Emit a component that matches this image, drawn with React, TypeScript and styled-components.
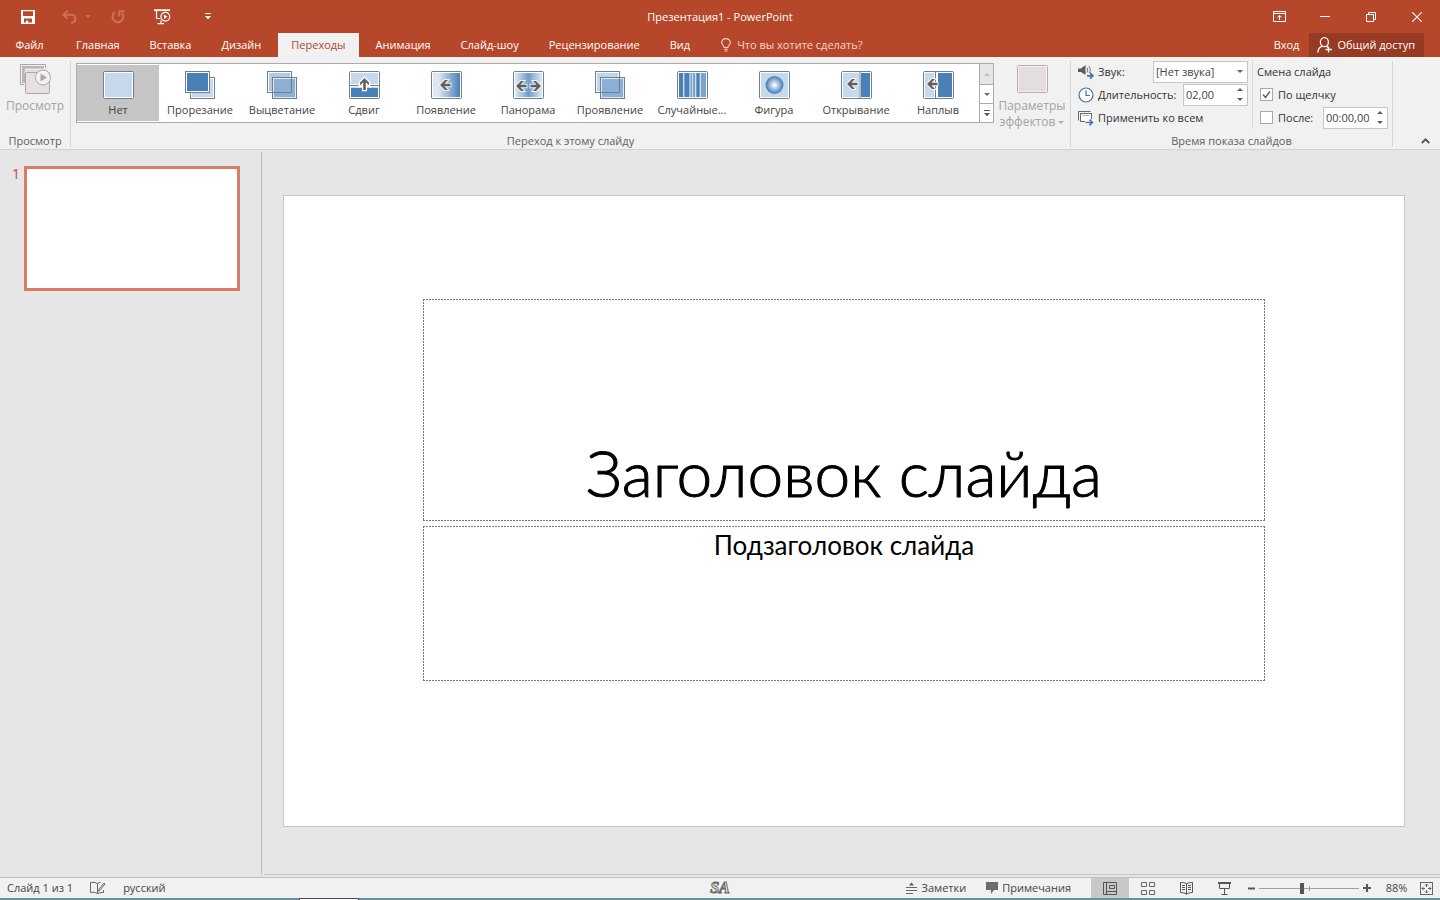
import React, { useState } from "react";
import styled, { createGlobalStyle, css } from "styled-components";

const UI_FONT = `"Open Sans", "Noto Sans", sans-serif`;

const GlobalStyle = createGlobalStyle`
  *, *::before, *::after { box-sizing: border-box; }
  body { margin: 0; background: #e6e6e6; }
  button, input, select { font: inherit; color: inherit; margin: 0; }
  svg { display: block; flex: none; }
`;

const Window = styled.div`
  display: flex;
  flex-direction: column;
  min-height: 100vh;
  font: 11px/16px ${UI_FONT};
  color: #444;
`;

const plainButton = css`
  border: 0;
  padding: 0;
  background: transparent;
  cursor: pointer;
`;

/* Title bar */
const Header = styled.header`
  background: #b7472a;
  color: #fff;
`;
const TitleBar = styled.div`
  display: grid;
  grid-template-columns: 1fr auto 1fr;
  align-items: center;
  height: 33px;
`;
const QuickAccess = styled.div`
  display: flex;
  padding-left: 5px;
`;
const QuickButton = styled.button<{ $dim?: boolean; $split?: boolean }>`
  ${plainButton}
  display: flex;
  align-items: center;
  justify-content: ${(p) => (p.$split ? "flex-end" : "center")};
  gap: 8px;
  padding-right: ${(p) => (p.$split ? "4px" : "0")};
  width: 45px;
  height: 30px;
  color: ${(p) => (p.$dim ? "#cf6f57" : "#fff")};
`;
const Caption = styled.h1`
  margin: 0;
  font-size: 11px;
  font-weight: 400;
  line-height: 16px;
`;
const WindowControls = styled.div`
  display: flex;
  justify-content: flex-end;
`;
const ControlButton = styled.button`
  ${plainButton}
  display: grid;
  place-items: center;
  width: 46px;
  height: 30px;
  color: #fff;
`;

/* Tabs */
const TabBar = styled.nav`
  display: flex;
  align-items: stretch;
  height: 24px;
  padding-right: 16px;
`;
const FileTab = styled.button`
  ${plainButton}
  width: 59px;
`;
const Tabs = styled.div`
  display: flex;
  gap: 4px;
  margin-left: 4px;
`;
const Tab = styled.button<{ $active?: boolean }>`
  ${plainButton}
  padding: 0 13px;
  white-space: nowrap;
  background: ${(p) => (p.$active ? "#f1f1f1" : "transparent")};
  color: ${(p) => (p.$active ? "#b7472a" : "inherit")};
`;
const TellMe = styled.button`
  ${plainButton}
  display: flex;
  align-items: center;
  gap: 6px;
  margin-left: 18px;
  color: #f7d5cb;
`;
const Account = styled.div`
  display: flex;
  margin-left: auto;
`;
const SignIn = styled.button`
  ${plainButton}
  padding: 0 10px;
`;
const Share = styled.button`
  ${plainButton}
  display: flex;
  align-items: center;
  gap: 4px;
  padding: 0 9px 0 8px;
  background: #963a24;
  color: #fff;
`;

/* Ribbon */
const Ribbon = styled.section`
  display: flex;
  height: 93px;
  padding: 4px 0 2px;
  background: #f1f1f1;
  border-bottom: 1px solid #d2d2d2;
`;
const Group = styled.div<{ $grow?: boolean }>`
  display: flex;
  flex-direction: column;
  justify-content: space-between;
  flex: ${(p) => (p.$grow ? "1 1 0" : "none")};
  min-width: 0;
  padding-top: 2px;
  border-right: 1px solid #d5d5d5;
`;
const GroupBody = styled.div`
  display: flex;
`;
const GroupLabel = styled.div`
  text-align: center;
  color: #606060;
  line-height: 12px;
`;
const BigButton = styled.button<{ $wide?: boolean }>`
  ${plainButton}
  display: flex;
  flex-direction: column;
  align-items: center;
  gap: ${(p) => (p.$wide ? "5px" : "3px")};
  width: ${(p) => (p.$wide ? "76px" : "70px")};
  padding-top: ${(p) => (p.$wide ? "2px" : "1px")};
  font-size: 12px;
  color: #a3a3a3;
`;
const WithArrow = styled.span`
  display: inline-flex;
  align-items: center;
  gap: 3px;
`;
const Gallery = styled.div`
  display: flex;
  flex: 1 1 0;
  min-width: 0;
  height: 60px;
  margin-left: 5px;
  background: #fff;
  border: 1px solid #ababab;
`;
const GalleryItem = styled.button<{ $selected?: boolean }>`
  ${plainButton}
  display: flex;
  flex-direction: column;
  align-items: center;
  gap: 3px;
  flex: 1 1 0;
  min-width: 0;
  padding-top: 6px;
  margin: 1px 0;
  white-space: nowrap;
  background: ${(p) => (p.$selected ? "#c5c5c5" : "transparent")};
`;
const GalleryScroll = styled.div`
  display: grid;
  grid-template-rows: 20px 19px 19px;
  width: 14px;
  border-left: 1px solid #ababab;
`;
const ScrollButton = styled.button`
  ${plainButton}
  display: grid;
  place-items: center;
  color: #555;
  & + & { border-top: 1px solid #ababab; }
  &:disabled { background: #e6e6e6; color: #b5b5b5; }
`;

const TimingColumn = styled.div<{ $second?: boolean }>`
  display: grid;
  grid-template-rows: repeat(3, 23px);
  align-items: center;
  width: ${(p) => (p.$second ? "140px" : "181px")};
  padding: ${(p) => (p.$second ? "0 4px" : "0 4px 0 7px")};
  margin-top: -3px;
  border-left: ${(p) => (p.$second ? "1px solid #dcdcdc" : "0")};
`;
const TimingRow = styled.div`
  display: flex;
  align-items: center;
  gap: 4px;
  color: #333;
  white-space: nowrap;
`;
const CommandButton = styled.button`
  ${plainButton}
  display: flex;
  align-items: center;
  gap: 4px;
`;
const Field = styled.div<{ $w: number }>`
  display: grid;
  grid-template-columns: 1fr 14px;
  width: ${(p) => p.$w}px;
  height: 22px;
  margin-left: auto;
  background: #fff;
  border: 1px solid #c6c6c6;
  color: #444;
`;
const TextInput = styled.input`
  min-width: 0;
  border: 0;
  padding: 0 0 0 2px;
  background: transparent;
`;
const Select = styled.select`
  grid-area: 1 / 1 / 2 / 3;
  min-width: 0;
  border: 0;
  padding: 0 0 0 2px;
  background: transparent;
  appearance: none;
`;
const SelectArrow = styled.span`
  grid-area: 1 / 2;
  display: grid;
  place-items: center;
  pointer-events: none;
`;
const Steps = styled.span`
  display: grid;
  grid-template-rows: 1fr 1fr;
`;
const Step = styled.button`
  ${plainButton}
  display: grid;
  place-items: center;
`;
const CheckBox = styled.span`
  display: grid;
  width: 13px;
  height: 13px;
  margin-left: 3px;
  margin-right: 1px;
  input, svg { grid-area: 1 / 1; }
  svg { pointer-events: none; visibility: hidden; }
  input { appearance: none; width: 13px; height: 13px; border: 1px solid #a8a8a8; background: #fff; }
  input:checked + svg { visibility: visible; }
`;
const Collapse = styled.button`
  ${plainButton}
  align-self: flex-end;
  display: grid;
  place-items: center;
  width: 30px;
  height: 12px;
  margin-left: 17px;
  color: #555;
`;

/* Workspace */
const Workspace = styled.main`
  display: flex;
  flex: 1;
  padding-top: 2px;
  background: #e6e6e6;
`;
const ThumbPane = styled.aside`
  width: 262px;
  padding: 14px 21px 0 12px;
  margin-bottom: 2px;
  border-right: 1px solid #bdbdbd;
`;
const ThumbRow = styled.div`
  display: flex;
  gap: 4px;
  color: #c8492b;
  font-size: 14px;
  line-height: 16px;
`;
const Thumb = styled.button`
  ${plainButton}
  flex: 1;
  aspect-ratio: 216 / 125;
  background: #fff;
  border: 3px solid #d97c64;
`;
const Stage = styled.div`
  display: flex;
  flex: 1;
  min-width: 0;
  align-items: center;
  padding: 0 35px 4px 19px;
  margin: 0 0 2px 2px;
  border-bottom: 1px solid #c3c3c3;
`;
const Slide = styled.article`
  display: grid;
  grid-template-rows: 103fr 222fr 5fr 155fr 145fr;
  width: 100%;
  aspect-ratio: 1122 / 632;
  padding: 0 12.4%;
  background: #fff;
  border: 1px solid #c6c6c6;
  color: #000;
  font-family: Lato, Carlito, sans-serif;
`;
const dash = (direction: string) =>
  `repeating-linear-gradient(${direction}, #777 0 2px, transparent 2px 3px)`;
const Placeholder = styled.div<{ $row: number; $bottom?: boolean }>`
  grid-row: ${(p) => p.$row};
  display: flex;
  justify-content: center;
  align-items: ${(p) => (p.$bottom ? "flex-end" : "flex-start")};
  padding: 4px 8px 10px;
  background:
    ${dash("90deg")} top / 100% 1px no-repeat,
    ${dash("90deg")} bottom / 100% 1px no-repeat,
    ${dash("180deg")} left / 1px 100% no-repeat,
    ${dash("180deg")} right / 1px 100% no-repeat;
`;
const SlideTitle = styled.h2`
  margin: 0;
  font-size: 64px;
  line-height: 76px;
  font-weight: 300;
  -webkit-text-stroke: 1px #000;
`;
const SlideSubtitle = styled.p`
  margin: 0;
  font-size: 26px;
  line-height: 30px;
`;

/* Status bar */
const StatusBar = styled.footer`
  display: grid;
  grid-template-columns: 1fr auto 1fr;
  align-items: center;
  height: 21px;
  background: #f1f1f1;
  border-top: 1px solid #bdbdbd;
`;
const StatusSide = styled.div<{ $end?: boolean }>`
  display: flex;
  align-items: center;
  justify-content: ${(p) => (p.$end ? "flex-end" : "flex-start")};
  gap: ${(p) => (p.$end ? "0" : "17px")};
  height: 20px;
  padding: 0 6px 0 7px;
  white-space: nowrap;
`;
const StatusButton = styled.button<{ $spaced?: boolean }>`
  ${plainButton}
  display: flex;
  align-items: center;
  gap: 4px;
  margin-right: ${(p) => (p.$spaced ? "20px" : "0")};
`;
const ViewButton = styled.button<{ $active?: boolean }>`
  ${plainButton}
  display: grid;
  place-items: center;
  width: 38px;
  height: 20px;
  background: ${(p) => (p.$active ? "#c8c8c8" : "transparent")};
`;
const ZoomButton = styled.button`
  ${plainButton}
  display: grid;
  place-items: center;
  width: 16px;
  height: 20px;
`;
const ZoomRange = styled.input`
  appearance: none;
  width: 100px;
  height: 12px;
  background:
    linear-gradient(#a0a0a0, #a0a0a0) center / 1px 5px no-repeat,
    linear-gradient(#a0a0a0, #a0a0a0) center / 100% 1px no-repeat;
  &::-webkit-slider-thumb {
    appearance: none;
    width: 4px;
    height: 11px;
    background: #555;
  }
`;
const ZoomValue = styled.button`
  ${plainButton}
  width: 43px;
`;
const Watermark = styled.div`
  font: italic bold 16px/16px "Liberation Serif", serif;
  color: #f1f1f1;
  -webkit-text-stroke: 1px #666;
`;
const Taskbar = styled.div`
  height: 2px;
  padding-left: 299px;
  background: #6892a3;
`;
const TaskbarItem = styled.div`
  width: 60px;
  height: 2px;
  background: #fff;
  border: 1px solid #4b4568;
  border-bottom: 0;
`;

/* Icons */
const Tri = ({ up, w = 6 }: { up?: boolean; w?: number }) => (
  <svg width={w} height={w / 2} viewBox="0 0 6 3">
    <path d={up ? "M0 3L3 0L6 3Z" : "M0 0H6L3 3Z"} fill="currentColor" opacity="0.85" />
  </svg>
);
const SaveIcon = () => (
  <svg width="14" height="14" viewBox="0 0 14 14">
    <path fill="currentColor" fillRule="evenodd" d="M0 0H14V14H0ZM2 1.3V6H12V1.3ZM3 8.5V12.6H5V10.4H7.2V12.6H11V8.5Z" />
  </svg>
);
const UndoIcon = () => (
  <svg width="15" height="14" viewBox="0 0 15 14" fill="none" stroke="currentColor" strokeWidth="2">
    <path d="M5.6 0.8L1.4 4.8L5.6 8.8M1.6 4.8H9.2C12 4.8 13.4 6.6 13.4 8.7C13.4 11 11.8 12.4 9 12.9" />
  </svg>
);
const RedoIcon = () => (
  <svg width="14" height="14" viewBox="0 0 14 14" fill="none" stroke="currentColor" strokeWidth="2">
    <path d="M4 2.2A5.4 5.4 0 1 0 10.8 3M8.2 6.5V1.2H13.5" />
  </svg>
);
const PresentIcon = () => (
  <svg width="17" height="16" viewBox="0 0 17 16" fill="none" stroke="currentColor" strokeWidth="1.2">
    <path d="M0 1.2H16" strokeWidth="1.8" />
    <path d="M2.5 2V9.5H6M7 11.5V14.5M3.5 14.7H10" />
    <circle cx="11.3" cy="7.8" r="4.4" />
    <path d="M10 5.6V10L13.6 7.8Z" fill="currentColor" stroke="none" />
  </svg>
);
const CustomizeIcon = () => (
  <svg width="6" height="7" viewBox="0 0 6 7" fill="currentColor">
    <path d="M0 0H6V1.1H0ZM0 3H6L3 6.2Z" />
  </svg>
);
const RibbonOptionsIcon = () => (
  <svg width="13" height="11" viewBox="0 0 13 11" fill="none" stroke="currentColor">
    <path d="M0.5 0.5H12.5V10.5H0.5ZM0.5 2.5H12.5M6.5 9V4.5M4.3 6.5L6.5 4.3L8.7 6.5" />
  </svg>
);
const MinimizeIcon = () => (
  <svg width="10" height="10" viewBox="0 0 10 10"><path d="M0 4.5H10" stroke="currentColor" /></svg>
);
const RestoreIcon = () => (
  <svg width="10" height="10" viewBox="0 0 10 10" fill="none" stroke="currentColor">
    <path d="M0.5 2.5H7.5V9.5H0.5ZM2.5 2.5V0.5H9.5V7.5H7.5" />
  </svg>
);
const CloseIcon = () => (
  <svg width="10" height="10" viewBox="0 0 10 10" stroke="currentColor" strokeWidth="1.1"><path d="M0 0L10 10M10 0L0 10" /></svg>
);
const BulbIcon = () => (
  <svg width="10" height="14" viewBox="0 0 10 14" fill="none" stroke="currentColor" strokeWidth="1.1">
    <path d="M3.2 9.5C3.2 7.8 0.7 7 0.7 4.6A4.3 4 0 0 1 9.3 4.6C9.3 7 6.8 7.8 6.8 9.5ZM3.2 11.3H6.8M3.6 13H6.4" />
  </svg>
);
const ShareIcon = () => (
  <svg width="16" height="16" viewBox="0 0 16 16" fill="none" stroke="currentColor" strokeWidth="1.3">
    <ellipse cx="7.4" cy="5.2" rx="4" ry="4.5" />
    <path d="M0.8 15.5C1 12 3 10 5.4 9.2M9.4 9.2L11 10.4M11.5 9.5V15.5M8.5 12.5H15" />
  </svg>
);
const PreviewIcon = () => (
  <svg width="31" height="31" viewBox="0 0 31 31" stroke="#aaa6a9">
    <path d="M0.5 20.5V0.5H25.5V4M0.5 20.5H4" fill="none" />
    <path d="M2 2H24V4.5H5V19H2Z" fill="#b9b6b8" stroke="none" />
    <rect x="4.5" y="5.5" width="23" height="4" fill="#e2dde0" stroke="none" />
    <rect x="5.5" y="8.5" width="24" height="21" rx="1" fill="#e6e0e4" />
    <circle cx="23" cy="13.5" r="7.5" fill="#f4f1f3" />
    <path d="M20.5 9.5V17.5L27 13.5Z" fill="#aaa6a9" stroke="none" />
  </svg>
);
const EffectIcon = () => (
  <svg width="31" height="28" viewBox="0 0 31 28">
    <rect x="0.5" y="0.5" width="30" height="27" rx="1" fill="#e3dde2" stroke="#b5aeb3" />
    <rect x="1.5" y="1.5" width="28" height="25" fill="none" stroke="#f3eff2" />
  </svg>
);

const EDGE = "#6b7f96";
const PALE = "#c7d8ea";
const BLUE = "#4a7fb8";
const ARROW_LEFT = "M0 5L5 0H8L4.4 3.8H10.5V6.2H4.4L8 10H5Z";

const Frame = ({ fill }: { fill: string }) => (
  <>
    <rect x="0.5" y="0.5" width="30" height="27" rx="1" fill="#fff" stroke={EDGE} />
    <rect x="2" y="2" width="27" height="24" fill={fill} />
  </>
);
const Arrow = ({ x, y, flip }: { x: number; y: number; flip?: boolean }) => (
  <path
    d={ARROW_LEFT}
    transform={flip ? `translate(${x + 11} ${y}) scale(-1 1)` : `translate(${x} ${y})`}
    fill="#606060"
    stroke="#fff"
    strokeOpacity="0.8"
    strokeWidth="2"
    paintOrder="stroke"
  />
);

type Kind = "none" | "cut" | "fade" | "push" | "wipe" | "split" | "reveal" | "bars" | "shape" | "uncover" | "cover";

const drawings: Record<Kind, React.ReactNode> = {
  none: <Frame fill={PALE} />,
  cut: (
    <>
      <rect x="5.5" y="6.5" width="24" height="21" fill="#fff" stroke={EDGE} />
      <rect x="7" y="8" width="21" height="18" fill={PALE} />
      <rect x="0.5" y="0.5" width="24" height="21" fill="#fff" stroke={EDGE} />
      <rect x="2" y="2" width="21" height="18" fill={BLUE} />
    </>
  ),
  fade: (
    <>
      <rect x="0.5" y="0.5" width="24" height="21" fill="#fff" stroke={EDGE} />
      <rect x="2" y="2" width="21" height="18" fill="#b4cbe1" />
      <rect x="5.5" y="6.5" width="24" height="21" fill="#dfe9f3" stroke={EDGE} />
      <rect x="7" y="8" width="21" height="18" fill="#8cafd3" />
      <path d="M6 21.5H24.5V7" fill="none" stroke={EDGE} />
    </>
  ),
  push: (
    <>
      <Frame fill={PALE} />
      <path d="M1 14.5H30" stroke="#fff" strokeWidth="3" />
      <path d="M1 14.5H30" stroke={EDGE} />
      <rect x="2" y="17" width="27" height="9" fill={BLUE} />
      <path d="M15.5 7L20 11.5V14.3L16.8 11.2V19H14.2V11.2L11 14.3V11.5Z" fill="#606060" stroke="#fff" strokeWidth="2.5" paintOrder="stroke" />
    </>
  ),
  wipe: (
    <>
      <Frame fill="url(#wipe)" />
      <Arrow x={9} y={9} />
    </>
  ),
  split: (
    <>
      <Frame fill="url(#split)" />
      <Arrow x={3} y={10} />
      <Arrow x={17} y={10} flip />
    </>
  ),
  reveal: (
    <>
      <rect x="0.5" y="0.5" width="24" height="21" fill="#fff" stroke={EDGE} />
      <rect x="2" y="2" width="21" height="18" fill="#c3d4e6" />
      <rect x="5.5" y="6.5" width="24" height="21" fill="#dfe9f3" stroke={EDGE} />
      <rect x="7" y="8" width="21" height="18" fill="#8cafd8" />
      <path d="M6 21.5H24.5V7" fill="none" stroke={EDGE} />
    </>
  ),
  bars: (
    <>
      <Frame fill="#7da3cc" />
      <path d="M2 2H6V26H2ZM8 2H12V26H8ZM20 2H22V26H20Z" fill={BLUE} />
      <path d="M6.5 2V26M13 2V26M15.5 2V26M18.5 2V26M23.5 2V26" stroke="#cfdeed" />
    </>
  ),
  shape: (
    <>
      <Frame fill={PALE} />
      <circle cx="15.5" cy="14" r="9" fill="url(#shape)" />
    </>
  ),
  uncover: (
    <>
      <Frame fill={PALE} />
      <rect x="18" y="1" width="12" height="26" fill="#fff" />
      <path d="M19 0.5V27.5" stroke={EDGE} />
      <rect x="20" y="2" width="9" height="24" fill={BLUE} />
      <Arrow x={6} y={8} />
    </>
  ),
  cover: (
    <>
      <Frame fill={PALE} />
      <rect x="11" y="1" width="19" height="26" fill="#fff" />
      <path d="M12.5 0.5V27.5" stroke={EDGE} />
      <rect x="15" y="2" width="14" height="24" fill={BLUE} />
      <Arrow x={4} y={8} />
    </>
  ),
};

const Defs = styled.svg`
  position: absolute;
`;
const GradientDefs = () => (
  <Defs width="0" height="0" aria-hidden="true">
    <defs>
      <linearGradient id="wipe">
        <stop offset="0.2" stopColor="#dfe8f2" />
        <stop offset="1" stopColor={BLUE} />
      </linearGradient>
      <linearGradient id="split">
        <stop offset="0" stopColor="#dfe8f2" />
        <stop offset="0.5" stopColor="#6f9ccb" />
        <stop offset="1" stopColor="#dfe8f2" />
      </linearGradient>
      <radialGradient id="shape">
        <stop offset="0.1" stopColor="#f2f7fc" />
        <stop offset="0.9" stopColor="#4f86c2" />
      </radialGradient>
    </defs>
  </Defs>
);

const SoundIcon = () => (
  <svg width="16" height="16" viewBox="0 0 16 16" fill="none">
    <path d="M0 4.5H3L7.5 1V11L3 8H0Z" fill="#5c5c5c" />
    <path d="M9 3.5Q10.5 6 9 8.5M11 2Q13.5 6 11.5 9" stroke="#777" />
    <path d="M9 11.8H14.5M12 9L15 11.8L12 14.6" stroke="#3f78b5" strokeWidth="1.8" />
  </svg>
);
const ClockIcon = () => (
  <svg width="16" height="16" viewBox="0 0 16 16" fill="#fff" stroke="#44719f" strokeWidth="1.2">
    <circle cx="8" cy="8" r="7" />
    <path d="M8 3.5V8.5H12" fill="none" stroke="#44719f" />
  </svg>
);
const ApplyIcon = () => (
  <svg width="16" height="16" viewBox="0 0 16 16" fill="#fff">
    <path d="M0.5 10.5V1.5H12.5" fill="none" stroke="#6a6a6a" />
    <rect x="2.5" y="3.5" width="11" height="8" stroke="#6a6a6a" />
    <path d="M4.5 5.5H11.5" stroke="#b9a9b9" />
    <path d="M7 12.5H14M11.5 9.5L14.8 12.5L11.5 15.5" fill="none" stroke="#fff" strokeWidth="3" />
    <path d="M7.5 12.5H14M11.5 9.7L14.5 12.5L11.5 15.3" fill="none" stroke="#3f78b5" strokeWidth="1.6" />
  </svg>
);
const SpellIcon = () => (
  <svg width="16" height="14" viewBox="0 0 16 14" fill="none" stroke="#666">
    <path d="M7.5 12.5V2.5Q4 0.5 0.5 1.5V11.5Q4 10.5 7.5 12.5Q9.5 11.2 13.5 11.5V9M7.5 2.5Q9 1.5 10.5 1.5" />
    <path d="M8.5 10L9.5 7.5L14 2L15 3L10.5 8.5Z" />
  </svg>
);
const NotesIcon = () => (
  <svg width="12" height="12" viewBox="0 0 12 12">
    <path d="M0 5.5H11M0 8.5H11M0 11.5H7" stroke="#666" />
    <path d="M3 3.5L5.5 0.5L8 3.5Z" fill="#555" />
  </svg>
);
const CommentsIcon = () => (
  <svg width="12" height="12" viewBox="0 0 12 12"><path d="M0 0H12V8H8L5 12V8H0Z" fill="#6b6b6b" /></svg>
);
const NormalIcon = () => (
  <svg width="14" height="13" viewBox="0 0 14 13" fill="none" stroke="#555">
    <path d="M0.5 0.5H13.5V12.5H0.5ZM3.5 0.5V12.5M3.5 9.5H13.5M6.5 3.5H11.5V6.5H6.5Z" />
  </svg>
);
const SorterIcon = () => (
  <svg width="14" height="13" viewBox="0 0 14 13" fill="none" stroke="#666">
    <path d="M0.5 0.5H5.5V4.5H0.5ZM8.5 0.5H13.5V4.5H8.5ZM0.5 8.5H5.5V12.5H0.5ZM8.5 8.5H13.5V12.5H8.5Z" />
  </svg>
);
const ReadingIcon = () => (
  <svg width="13" height="13" viewBox="0 0 13 13" fill="none" stroke="#555">
    <path d="M6.5 12.5V1.5Q4 0.5 0.5 0.5V10.5Q4 10.5 6.5 12Q9 10.5 12.5 10.5V0.5Q9 0.5 6.5 1.5M2 3.5H5M2 5.5H5M2 7.5H5M8 3.5H11M8 5.5H11M8 7.5H11" />
  </svg>
);
const ShowIcon = () => (
  <svg width="13" height="13" viewBox="0 0 13 13" fill="none" stroke="#555">
    <path d="M0 1H13" strokeWidth="2" />
    <path d="M1.5 2V6.5H11.5V2M6.5 7V12M3.5 12.5H9.5" />
  </svg>
);
const FitIcon = () => (
  <svg width="13" height="13" viewBox="0 0 13 13" fill="none" stroke="#666">
    <rect x="0.5" y="0.5" width="12" height="12" />
    <path d="M6.5 2V5M5 3.5L6.5 2L8 3.5M6.5 11V8M5 9.5L6.5 11L8 9.5M2 6.5H5M3.5 5L2 6.5L3.5 8M11 6.5H8M9.5 5L11 6.5L9.5 8" />
  </svg>
);

const tabs = ["Главная", "Вставка", "Дизайн", "Переходы", "Анимация", "Слайд-шоу", "Рецензирование", "Вид"];

const transitions: { kind: Kind; label: string }[] = [
  { kind: "none", label: "Нет" },
  { kind: "cut", label: "Прорезание" },
  { kind: "fade", label: "Выцветание" },
  { kind: "push", label: "Сдвиг" },
  { kind: "wipe", label: "Появление" },
  { kind: "split", label: "Панорама" },
  { kind: "reveal", label: "Проявление" },
  { kind: "bars", label: "Случайные..." },
  { kind: "shape", label: "Фигура" },
  { kind: "uncover", label: "Открывание" },
  { kind: "cover", label: "Наплыв" },
];

const Spinner = ({ id, value, width }: { id: string; value: string; width: number }) => (
  <Field $w={width}>
    <TextInput id={id} defaultValue={value} />
    <Steps>
      <Step aria-label="Больше"><Tri up /></Step>
      <Step aria-label="Меньше"><Tri /></Step>
    </Steps>
  </Field>
);

const Check = ({ id, checked }: { id: string; checked?: boolean }) => (
  <CheckBox>
    <input type="checkbox" id={id} defaultChecked={checked} />
    <svg width="13" height="13" viewBox="0 0 13 13" fill="none" stroke="#666" strokeWidth="1.5">
      <path d="M3 6.5L5.5 9.5L10 3.5" />
    </svg>
  </CheckBox>
);

export default function App() {
  const [tab, setTab] = useState("Переходы");
  const [transition, setTransition] = useState<Kind>("none");

  return (
    <Window>
      <GlobalStyle />
      <GradientDefs />
      <Header>
        <TitleBar>
          <QuickAccess>
            <QuickButton aria-label="Сохранить"><SaveIcon /></QuickButton>
            <QuickButton $dim $split aria-label="Отменить"><UndoIcon /><Tri /></QuickButton>
            <QuickButton $dim aria-label="Повторить"><RedoIcon /></QuickButton>
            <QuickButton aria-label="С начала"><PresentIcon /></QuickButton>
            <QuickButton aria-label="Настройка панели"><CustomizeIcon /></QuickButton>
          </QuickAccess>
          <Caption>Презентация1 - PowerPoint</Caption>
          <WindowControls>
            <ControlButton aria-label="Параметры ленты"><RibbonOptionsIcon /></ControlButton>
            <ControlButton aria-label="Свернуть"><MinimizeIcon /></ControlButton>
            <ControlButton aria-label="Восстановить"><RestoreIcon /></ControlButton>
            <ControlButton aria-label="Закрыть"><CloseIcon /></ControlButton>
          </WindowControls>
        </TitleBar>
        <TabBar>
          <FileTab>Файл</FileTab>
          <Tabs>
            {tabs.map((name) => (
              <Tab key={name} $active={name === tab} onClick={() => setTab(name)}>{name}</Tab>
            ))}
          </Tabs>
          <TellMe><BulbIcon />Что вы хотите сделать?</TellMe>
          <Account>
            <SignIn>Вход</SignIn>
            <Share><ShareIcon />Общий доступ</Share>
          </Account>
        </TabBar>
      </Header>

      <Ribbon>
        <Group>
          <GroupBody>
            <BigButton disabled><PreviewIcon />Просмотр</BigButton>
          </GroupBody>
          <GroupLabel>Просмотр</GroupLabel>
        </Group>
        <Group $grow>
          <GroupBody>
            <Gallery>
              {transitions.map(({ kind, label }) => (
                <GalleryItem key={kind} $selected={kind === transition} onClick={() => setTransition(kind)}>
                  <svg width="31" height="28" viewBox="0 0 31 28">{drawings[kind]}</svg>
                  {label}
                </GalleryItem>
              ))}
              <GalleryScroll>
                <ScrollButton disabled aria-label="Вверх"><Tri up /></ScrollButton>
                <ScrollButton aria-label="Вниз"><Tri /></ScrollButton>
                <ScrollButton aria-label="Ещё"><CustomizeIcon /></ScrollButton>
              </GalleryScroll>
            </Gallery>
            <BigButton $wide disabled>
              <EffectIcon />
              <span>Параметры<br /><WithArrow>эффектов <Tri /></WithArrow></span>
            </BigButton>
          </GroupBody>
          <GroupLabel>Переход к этому слайду</GroupLabel>
        </Group>
        <Group>
          <GroupBody>
            <TimingColumn>
              <TimingRow>
                <SoundIcon />
                <label htmlFor="sound">Звук:</label>
                <Field $w={95}>
                  <Select id="sound"><option>[Нет звука]</option></Select>
                  <SelectArrow><Tri /></SelectArrow>
                </Field>
              </TimingRow>
              <TimingRow>
                <ClockIcon />
                <label htmlFor="duration">Длительность:</label>
                <Spinner id="duration" value="02,00" width={65} />
              </TimingRow>
              <TimingRow>
                <CommandButton><ApplyIcon />Применить ко всем</CommandButton>
              </TimingRow>
            </TimingColumn>
            <TimingColumn $second>
              <TimingRow>Смена слайда</TimingRow>
              <TimingRow>
                <Check id="click" checked />
                <label htmlFor="click">По щелчку</label>
              </TimingRow>
              <TimingRow>
                <Check id="after" />
                <label htmlFor="after">После:</label>
                <Spinner id="afterTime" value="00:00,00" width={65} />
              </TimingRow>
            </TimingColumn>
          </GroupBody>
          <GroupLabel>Время показа слайдов</GroupLabel>
        </Group>
        <Collapse aria-label="Свернуть ленту">
          <svg width="9" height="6" viewBox="0 0 9 6" fill="none" stroke="currentColor" strokeWidth="1.8"><path d="M0.8 5L4.5 1.3L8.2 5" /></svg>
        </Collapse>
      </Ribbon>

      <Workspace>
        <ThumbPane>
          <ThumbRow>
            <span>1</span>
            <Thumb aria-label="Слайд 1" />
          </ThumbRow>
        </ThumbPane>
        <Stage>
          <Slide>
            <Placeholder $row={2} $bottom><SlideTitle>Заголовок слайда</SlideTitle></Placeholder>
            <Placeholder $row={4}><SlideSubtitle>Подзаголовок слайда</SlideSubtitle></Placeholder>
          </Slide>
        </Stage>
      </Workspace>

      <StatusBar>
        <StatusSide>
          <StatusButton>Слайд 1 из 1</StatusButton>
          <StatusButton aria-label="Правописание"><SpellIcon /></StatusButton>
          <StatusButton>русский</StatusButton>
        </StatusSide>
        <Watermark>SA</Watermark>
        <StatusSide $end>
          <StatusButton $spaced><NotesIcon />Заметки</StatusButton>
          <StatusButton $spaced><CommentsIcon />Примечания</StatusButton>
          <ViewButton $active aria-label="Обычный"><NormalIcon /></ViewButton>
          <ViewButton aria-label="Сортировщик"><SorterIcon /></ViewButton>
          <ViewButton aria-label="Чтение"><ReadingIcon /></ViewButton>
          <ViewButton aria-label="Показ"><ShowIcon /></ViewButton>
          <ZoomButton aria-label="Уменьшить">
            <svg width="7" height="7" viewBox="0 0 7 7"><path d="M0 3.5H7" stroke="#555" strokeWidth="2" /></svg>
          </ZoomButton>
          <ZoomRange type="range" aria-label="Масштаб" min={0} max={100} defaultValue={43} />
          <ZoomButton aria-label="Увеличить">
            <svg width="8" height="8" viewBox="0 0 8 8"><path d="M0 4H8M4 0V8" stroke="#555" strokeWidth="2" /></svg>
          </ZoomButton>
          <ZoomValue>88%</ZoomValue>
          <ZoomButton aria-label="Вписать"><FitIcon /></ZoomButton>
        </StatusSide>
      </StatusBar>
      <Taskbar><TaskbarItem /></Taskbar>
    </Window>
  );
}
